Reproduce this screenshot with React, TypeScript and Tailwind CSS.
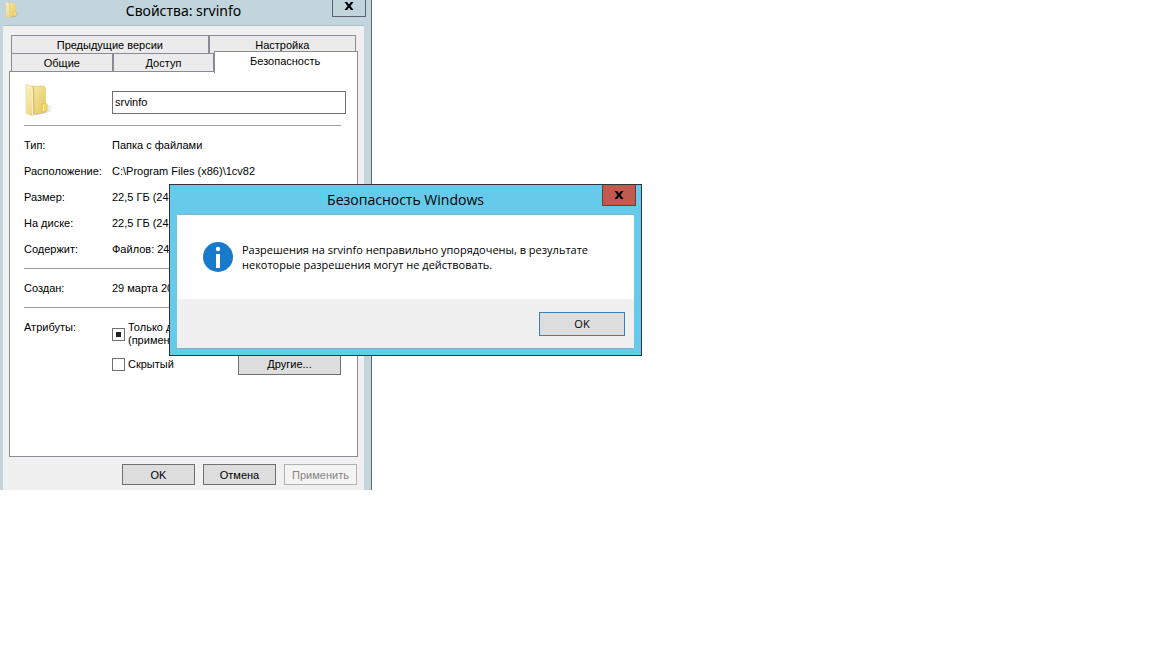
import React, { useId } from "react";
import clsx from "clsx";

const details = [
  { label: "Тип:", value: "Папка с файлами" },
  { label: "Расположение:", value: "C:\\Program Files (x86)\\1cv82" },
  { label: "Размер:", value: "22,5 ГБ (24 1" },
  { label: "На диске:", value: "22,5 ГБ (24 1" },
  { label: "Содержит:", value: "Файлов: 24" },
];

const FolderIcon = ({ className }: { className?: string }) => {
  const id = useId();

  return (
    <svg viewBox="0 0 32 34" className={className} aria-hidden="true">
      <defs>
        <linearGradient id={`${id}-back`} x1="0" y1="0" x2="1" y2="1">
          <stop offset="0" stopColor="#f6e8a6" />
          <stop offset="1" stopColor="#e6c65c" />
        </linearGradient>
        <linearGradient id={`${id}-front`} x1="0" y1="0" x2="1" y2="1">
          <stop offset="0" stopColor="#fbf2c2" />
          <stop offset="1" stopColor="#ecd27a" />
        </linearGradient>
        <linearGradient id={`${id}-shade`} x1="0" y1="0" x2="1" y2="0">
          <stop offset="0" stopColor="#6f6f72" stopOpacity="0.55" />
          <stop offset="1" stopColor="#6f6f72" stopOpacity="0" />
        </linearGradient>
      </defs>
      <path d="M10 31 L22 20 L30 23 L26 28 L18 30 Z" fill={`url(#${id}-shade)`} />
      <path d="M8 2 L20 2 L21.5 4 L21.5 28 L9 30 Z" fill={`url(#${id}-back)`} stroke="#dcc069" strokeWidth="0.5" />
      <path d="M18 20 L21 19 L23 20 L23 27 L18 28.5 Z" fill="#f4d75e" stroke="#dbb53c" strokeWidth="0.5" />
      <path d="M19.5 21 V27" stroke="#fff4b8" strokeWidth="1" />
      <path d="M2 0.5 L3 0.5 L9.5 3 L10 30 L8.5 32 L2 29 Z" fill={`url(#${id}-front)`} stroke="#dcc069" strokeWidth="0.5" />
      <path d="M3 1.5 L8 4.5 L8.5 31.5" fill="none" stroke="#fffbe2" strokeWidth="0.8" />
      <path d="M9.5 3.5 L10 30.5" stroke="#cfae4c" strokeWidth="0.8" />
    </svg>
  );
};

const CloseIcon = () => (
  <svg viewBox="0 0 10 8" className="h-2 w-2.5" aria-hidden="true">
    <path d="M0.5 0 H3.2 L5 2.5 L6.8 0 H9.5 L6.5 4 L9.5 8 H6.8 L5 5.5 L3.2 8 H0.5 L3.5 4 Z" fill="#000" />
  </svg>
);

const InfoIcon = () => (
  <svg viewBox="0 0 30 30" className="size-[30px] shrink-0" aria-hidden="true">
    <circle cx="15" cy="15" r="15" fill="#1979ca" />
    <circle cx="15" cy="7" r="2.2" fill="#fff" />
    <rect x="13" y="12" width="4" height="14" fill="#fff" />
  </svg>
);

type TabProps = {
  active?: boolean;
  className?: string;
  children: React.ReactNode;
};

const Tab = ({ active, className, children }: TabProps) => (
  <button
    type="button"
    role="tab"
    aria-selected={!!active}
    className={clsx(
      "border-x border-t border-[#898c95] text-center",
      active ? "relative -mt-0.5 -mb-0.5 bg-white pr-0.5 pb-1" : "bg-[#ebebeb]",
      className,
    )}
  >
    {children}
  </button>
);

const Button = ({ className, ...props }: React.ButtonHTMLAttributes<HTMLButtonElement>) => (
  <button
    type="button"
    className={clsx(
      "border border-[#707070] bg-[#dddddd] text-center disabled:border-[#adb2b5] disabled:bg-[#f4f4f4] disabled:text-[#838383]",
      className,
    )}
    {...props}
  />
);

const checkboxClass =
  "grid size-[13px] shrink-0 appearance-none place-items-center border border-[#707070] bg-white checked:before:size-[5px] checked:before:bg-[#212121] checked:before:content-['']";

const PropertiesWindow = () => (
  <section
    aria-label="Свойства: srvinfo"
    className="absolute top-0 left-0 w-[372px] border-r border-[#5d666a] bg-[#c2d5dc] pr-[7px] pl-[3px]"
  >
    <header className="relative flex h-[25px] items-start justify-center">
      <FolderIcon className="absolute top-0.5 left-0.5 h-[17px] w-4" />
      <h1 className="font-['Noto_Sans','Open_Sans',sans-serif] text-sm leading-[22px]">
        Свойства: srvinfo
      </h1>
      <button
        type="button"
        aria-label="Закрыть"
        className="absolute top-0 -right-0.5 flex h-[17px] w-[34px] items-center justify-center border border-t-0 border-[#5a6468] pb-1"
      >
        <CloseIcon />
      </button>
    </header>

    <div className="border-t border-[#aebfc5] bg-[#f0f0f0] px-1.5 pt-[9px] pb-[5px]">
      <div role="tablist">
        <div className="mx-0.5 flex h-[18px]">
          <Tab className="flex-[198]">Предыдущие версии</Tab>
          <Tab className="flex-[147]">Настройка</Tab>
        </div>
        <div className="ml-0.5 flex h-[18px]">
          <Tab className="flex-[102]">Общие</Tab>
          <Tab className="flex-[102]">Доступ</Tab>
          <Tab active className="flex-[143]">
            Безопасность
          </Tab>
        </div>
      </div>

      <div className="min-h-[386px] border border-[#898c95] bg-white pt-3 pr-4 pl-3.5">
        <div className="-mr-[5px] flex items-start">
          <div className="w-[88px] shrink-0">
            <FolderIcon className="h-[34px] w-8" />
          </div>
          <input
            type="text"
            aria-label="Имя папки"
            defaultValue="srvinfo"
            className="mt-[7px] h-[23px] min-w-0 flex-1 border border-[#707070] bg-white px-0.5 pb-0.5"
          />
        </div>

        <hr className="mt-[7px] border-[#a0a0a0]" />

        <dl className="mt-1.5">
          {details.map((item) => (
            <div key={item.label} className="flex h-[26px] items-center whitespace-nowrap">
              <dt className="w-[88px] shrink-0">{item.label}</dt>
              <dd>{item.value}</dd>
            </div>
          ))}
        </dl>

        <hr className="mt-1.5 border-[#a0a0a0]" />

        <dl className="flex h-[38px] items-center whitespace-nowrap">
          <dt className="w-[88px] shrink-0">Создан:</dt>
          <dd>29 марта 2015 г.</dd>
        </dl>

        <hr className="border-[#a0a0a0]" />

        <div role="group" aria-label="Атрибуты" className="flex pt-[13px] leading-[13px]">
          <span className="w-[88px] shrink-0">Атрибуты:</span>
          <div className="flex-1">
            <label className="flex items-center gap-[3px] whitespace-nowrap">
              <input type="checkbox" defaultChecked className={checkboxClass} />
              <span>
                Только для чтения
                <br />
                (применимо только к файлам)
              </span>
            </label>
            <div className="mt-1.5 flex items-center justify-between">
              <label className="flex items-center gap-[3px]">
                <input type="checkbox" className={checkboxClass} />
                Скрытый
              </label>
              <Button className="h-[22px] w-[103px]">Другие...</Button>
            </div>
          </div>
        </div>
      </div>

      <footer className="mt-[7px] flex justify-end gap-2 pr-px">
        <Button className="h-[21px] w-[73px]">OK</Button>
        <Button className="h-[21px] w-[73px]">Отмена</Button>
        <Button className="h-[21px] w-[73px]" disabled>
          Применить
        </Button>
      </footer>
    </div>
  </section>
);

const SecurityDialog = () => (
  <section
    role="alertdialog"
    aria-label="Безопасность Windows"
    className="absolute top-[184px] left-[169px] w-[473px] border border-[#2f363a] bg-[#66caea] px-[7px] pb-1.5 font-['Open_Sans','Noto_Sans',sans-serif]"
  >
    <header className="relative flex h-[29px] items-center justify-center">
      <h2 className="text-sm">Безопасность Windows</h2>
      <button
        type="button"
        aria-label="Закрыть"
        className="absolute top-0 -right-0.5 flex h-[21px] w-[34px] items-center justify-center border border-t-0 border-[#6d3a3a] bg-[#c35a50]"
      >
        <CloseIcon />
      </button>
    </header>

    <div className="border-y border-[#84b4c6]">
      <div className="flex h-[84px] items-center gap-[9px] bg-white pl-[26px]">
        <InfoIcon />
        <p className="text-[11px] leading-[15px] whitespace-nowrap">
          Разрешения на srvinfo неправильно упорядочены, в результате
          <br />
          некоторые разрешения могут не действовать.
        </p>
      </div>
      <div className="flex justify-end bg-[#f0f0f0] pt-[13px] pr-[9px] pb-3">
        <Button className="h-6 w-[86px] border-[#3c7fb1]!">OK</Button>
      </div>
    </div>
  </section>
);

const App = () => (
  <main className="relative min-h-screen overflow-hidden bg-white font-['Liberation_Sans',Arial,sans-serif] text-[11px] leading-[18px] text-black">
    <PropertiesWindow />
    <SecurityDialog />
  </main>
);

export default App;
